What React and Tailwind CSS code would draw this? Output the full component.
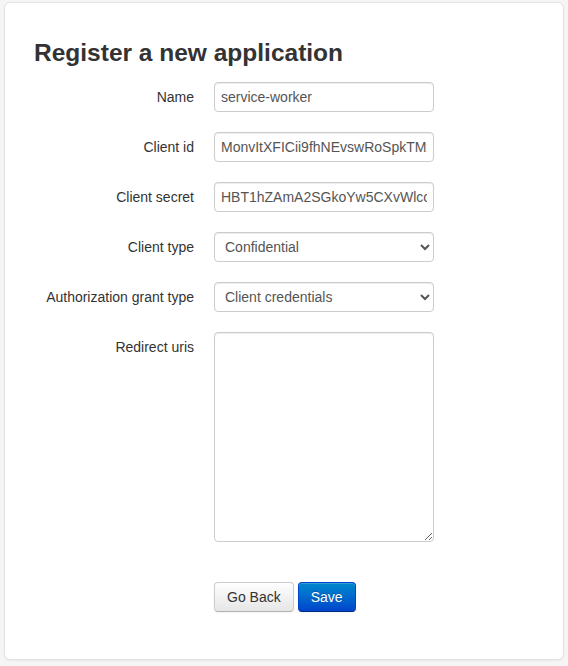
import React, { useState } from 'react';

const fields = [
  { label: 'Name', value: 'service-worker' },
  { label: 'Client id', value: 'MonvItXFICii9fhNEvswRoSpkTMxbJ7QqlTcQ4nr' },
  { label: 'Client secret', value: 'HBT1hZAmA2SGkoYw5CXvWlcoNc0eLPXrp0Wfd2J8' },
];

const inputCls =
  'w-[220px] h-[30px] px-[6px] py-[4px] text-[14px] leading-[20px] text-[#555] bg-white border border-[#ccc] rounded-[4px] shadow-[inset_0_1px_1px_rgba(0,0,0,0.075)] outline-none';

const Row = ({ label, children }) => (
  <div className="flex items-start mb-[20px]">
    <label className="w-[160px] shrink-0 text-right pt-[5px] text-[14px] leading-[20px] text-[#333]">{label}</label>
    <div className="ml-[20px]">{children}</div>
  </div>
);

const App = () => {
  const [clientType, setClientType] = useState('confidential');
  const [grant, setGrant] = useState('client-credentials');

  return (
    <div className="min-h-screen bg-[#f5f5f5] px-[4px] pt-[2px] pb-[4px] font-['Liberation_Sans',Arial,sans-serif]">
      <div className="bg-white border border-[#e3e3e3] rounded-[6px] shadow-[0_1px_2px_rgba(0,0,0,0.06)] pl-[29px] pt-[30px] pb-[47px]">
        <h1 className="text-[24.5px] leading-[40px] font-bold text-[#333] mb-[9px]">Register a new application</h1>

        <form onSubmit={e => e.preventDefault()}>
          {fields.map(f => (
            <Row key={f.label} label={f.label}>
              <input defaultValue={f.value} className={inputCls} />
            </Row>
          ))}
          <Row label="Client type">
            <select value={clientType} onChange={e => setClientType(e.target.value)} className={inputCls}>
              <option value="confidential">Confidential</option>
              <option value="public">Public</option>
            </select>
          </Row>
          <Row label="Authorization grant type">
            <select value={grant} onChange={e => setGrant(e.target.value)} className={inputCls}>
              <option value="authorization-code">Authorization code</option>
              <option value="implicit">Implicit</option>
              <option value="password">Resource owner password-based</option>
              <option value="client-credentials">Client credentials</option>
            </select>
          </Row>
          <Row label="Redirect uris">
            <textarea className={inputCls.replace('h-[30px]', 'h-[210px]') + ' block'} />
          </Row>

          <div className="flex gap-[4px] ml-[180px] mt-[40px]">
            <button type="button" className="h-[30px] px-[12px] text-[14px] leading-[20px] text-[#333] rounded-[4px] border border-[#ccc] border-b-[#b3b3b3] bg-gradient-to-b from-white to-[#e6e6e6] shadow-[inset_0_1px_0_rgba(255,255,255,0.2),0_1px_2px_rgba(0,0,0,0.05)]">
              Go Back
            </button>
            <button type="submit" className="h-[30px] px-[12px] text-[14px] leading-[20px] text-white rounded-[4px] border border-[#0044cc] border-b-[#002a80] bg-gradient-to-b from-[#0088cc] to-[#0044cc] [text-shadow:0_-1px_0_rgba(0,0,0,0.25)] shadow-[inset_0_1px_0_rgba(255,255,255,0.2),0_1px_2px_rgba(0,0,0,0.05)]">
              Save
            </button>
          </div>
        </form>
      </div>
    </div>
  );
};

export default App;
